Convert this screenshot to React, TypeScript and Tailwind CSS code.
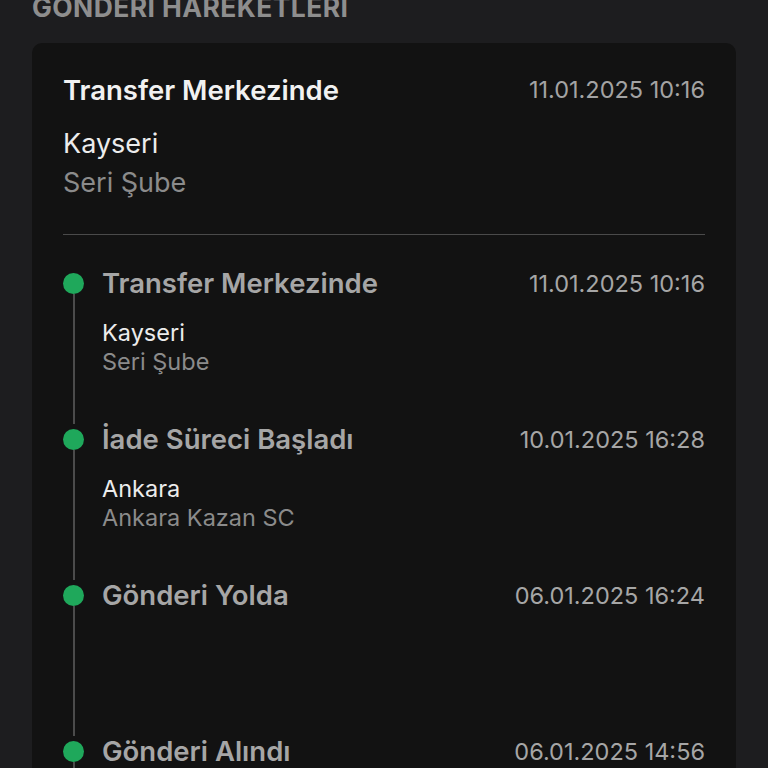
import React from "react";

type Item = { title: string; date: string; city?: string; branch?: string };

const items: Item[] = [
  { title: "Transfer Merkezinde", date: "11.01.2025 10:16", city: "Kayseri", branch: "Seri Şube" },
  { title: "İade Süreci Başladı", date: "10.01.2025 16:28", city: "Ankara", branch: "Ankara Kazan SC" },
  { title: "Gönderi Yolda", date: "06.01.2025 16:24" },
  { title: "Gönderi Alındı", date: "06.01.2025 14:56" },
];

export default function App() {
  return (
    <div
      className="h-[768px] w-[768px] overflow-hidden bg-[#1d1d1f]"
      style={{ fontFamily: "Inter, 'Noto Sans', sans-serif" }}
    >
      <div className="mt-[-10px] px-[32px] text-[26.5px] font-bold leading-[34px] tracking-[0.4px] text-[#8e8e8e]">
        GÖNDERİ HAREKETLERİ
      </div>
      <div className="mx-[32px] mt-[19px] rounded-t-[10px] bg-[#121212] px-[31px] pt-[30px]">
        <div className="flex items-center justify-between">
          <div className="text-[27.5px] font-semibold leading-[34px] text-[#f1f1f1]">Transfer Merkezinde</div>
          <div className="text-[23.5px] leading-[34px] text-[#a3a3a3]">11.01.2025 10:16</div>
        </div>
        <div className="mt-[17px] text-[27px] leading-[39px] text-[#ececec]">Kayseri</div>
        <div className="text-[27px] leading-[39px] text-[#8b8b8b]">Seri Şube</div>
        <div className="mt-[32px] h-[1px] bg-[#4a4a4a]" />
        <div className="pt-[33px]">
          {items.map((it, i) => (
            <div key={i} className="flex h-[156px]">
              <div className="flex w-[21px] flex-col items-center pt-[5px]">
                <div className="h-[21px] w-[21px] shrink-0 rounded-full bg-[#1fa85b]" />
                <div className="w-[2px] flex-1 bg-[#4b4b4b]" />
              </div>
              <div className="ml-[18px] flex-1">
                <div className="flex items-center justify-between">
                  <div className="text-[27.5px] font-semibold leading-[31px] text-[#a6a6a6]">{it.title}</div>
                  <div className="text-[23.5px] leading-[31px] text-[#a6a6a6]">{it.date}</div>
                </div>
                {it.city && (
                  <div className="mt-[19px]">
                    <div className="text-[23.5px] leading-[29px] text-[#ececec]">{it.city}</div>
                    <div className="text-[23.5px] leading-[29px] text-[#8b8b8b]">{it.branch}</div>
                  </div>
                )}
              </div>
            </div>
          ))}
        </div>
      </div>
    </div>
  );
}
